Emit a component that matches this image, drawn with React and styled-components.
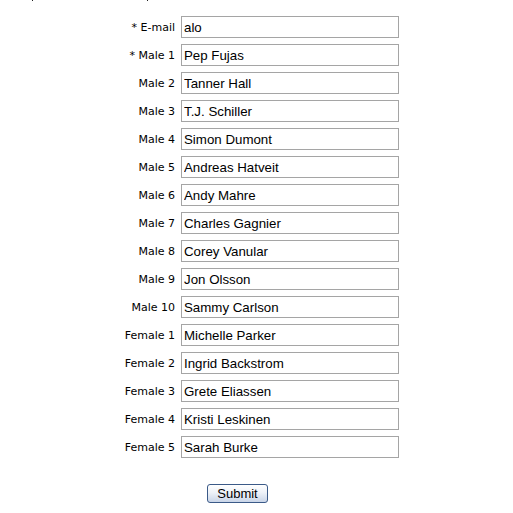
import React from "react";
import styled, { createGlobalStyle } from "styled-components";

const Global = createGlobalStyle`
  html, body { margin: 0; padding: 0; background: #ffffff; }
  body { font-family: "Liberation Sans", Arial, sans-serif; }
`;

const Page = styled.div`
  width: 513px;
  height: 513px;
  overflow: hidden;
  background: #fff;
`;

const Marks = styled.div`
  display: flex;
  height: 1px;
  padding-left: 32px;
  gap: 114px;
`;

const Mark = styled.span`
  width: 1px;
  height: 1px;
  background: #222;
`;

const Form = styled.form`
  display: grid;
  grid-template-columns: 175px 218px;
  column-gap: 6px;
  row-gap: 6px;
  padding-top: 15px;
`;

const Label = styled.label`
  font-family: "DejaVu Sans", Verdana, sans-serif;
  font-size: 11px;
  color: #000;
  text-align: right;
  display: flex;
  align-items: center;
  justify-content: flex-end;
  height: 22px;
  white-space: pre;
`;

const Field = styled.input`
  box-sizing: border-box;
  width: 218px;
  height: 22px;
  margin: 0;
  padding: 1px 2px 0 2px;
  border: 1px solid #a5a5a5;
  font-family: "Liberation Sans", Arial, sans-serif;
  font-size: 13.3px;
  color: #000;
  background: #fff;
  outline: none;
`;

const ButtonRow = styled.div`
  padding: 26px 0 0 207px;
`;

const SubmitButton = styled.button`
  box-sizing: border-box;
  width: 61px;
  height: 19px;
  padding: 0;
  margin: 0;
  border: 1px solid #3b5a88;
  border-radius: 3px;
  background: linear-gradient(#ffffff 0%, #eef2f8 45%, #c9d5e8 100%);
  font-family: "Liberation Sans", Arial, sans-serif;
  font-size: 13px;
  color: #000;
  line-height: 17px;
`;

const rows = [
  ["* E-mail", "alo"],
  ["* Male 1", "Pep Fujas"],
  ["Male 2", "Tanner Hall"],
  ["Male 3", "T.J. Schiller"],
  ["Male 4", "Simon Dumont"],
  ["Male 5", "Andreas Hatveit"],
  ["Male 6", "Andy Mahre"],
  ["Male 7", "Charles Gagnier"],
  ["Male 8", "Corey Vanular"],
  ["Male 9", "Jon Olsson"],
  ["Male 10", "Sammy Carlson"],
  ["Female 1", "Michelle Parker"],
  ["Female 2", "Ingrid Backstrom"],
  ["Female 3", "Grete Eliassen"],
  ["Female 4", "Kristi Leskinen"],
  ["Female 5", "Sarah Burke"],
];

export default function App() {
  return (
    <Page>
      <Global />
      <Marks>
        <Mark />
        <Mark />
      </Marks>
      <Form onSubmit={(e) => e.preventDefault()}>
        {rows.map(([label, value], i) => (
          <React.Fragment key={label}>
            <Label htmlFor={`f${i}`}>{label}</Label>
            <Field id={`f${i}`} defaultValue={value} />
          </React.Fragment>
        ))}
      </Form>
      <ButtonRow>
        <SubmitButton type="submit">Submit</SubmitButton>
      </ButtonRow>
    </Page>
  );
}
